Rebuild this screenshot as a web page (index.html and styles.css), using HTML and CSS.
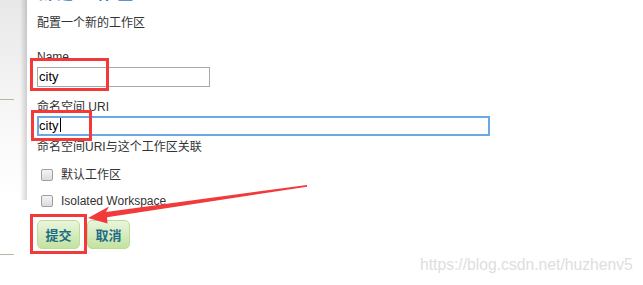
FILE: index.html
```html
<!DOCTYPE html>
<html lang="zh-CN">
<head>
  <meta charset="UTF-8">
  <title>新建工作区</title>
  <link rel="stylesheet" href="styles.css">
</head>
<body>
  <div class="page">
    <!-- left page area behind the dialog -->
    <div class="side"></div>

    <!-- workspace form -->
    <div class="dialog">
      <h2 class="title">新建工作区</h2>
      <p class="desc">配置一个新的工作区</p>

      <label class="field-label">Name</label>
      <div class="input name-input">city</div>

      <label class="field-label uri-label">命名空间 URI</label>
      <div class="input uri-input">city<span class="caret"></span></div>
      <p class="help">命名空间URI与这个工作区关联</p>

      <div class="check-row first"><span class="box"></span>默认工作区</div>
      <div class="check-row"><span class="box"></span>Isolated Workspace</div>

      <div class="buttons">
        <button class="btn">提交</button>
        <button class="btn">取消</button>
      </div>
    </div>
  </div>

  <!-- screenshot annotations -->
  <div class="mark mark-name"></div>
  <div class="mark mark-uri"></div>
  <div class="mark mark-submit"></div>
  <svg class="arrow" width="643" height="285" viewBox="0 0 643 285">
    <polygon points="88,218 109,206.5 106,212 307,185 307,186.8 107,217.2 107.5,223.5" fill="#f23a3a"/>
  </svg>
  <div class="watermark">https://blog.csdn.net/huzhenv5</div>
</body>
</html>
```

FILE: styles.css
```css
body, html {
  margin: 0;
  padding: 0;
  overflow: hidden;
  background: #fff;
  font-family: "Liberation Sans", "Noto Sans CJK SC", sans-serif;
  color: #333;
}
.page {
  display: flex;
  height: 285px;
}

/* Left side, behind the dialog */
.side {
  width: 27px;
  flex-shrink: 0;
  background:
    linear-gradient(#b2b8a4, #b2b8a4) no-repeat 0 99px / 14px 1px,
    linear-gradient(#b2b8a4, #b2b8a4) no-repeat 0 254px / 14px 1px,
    linear-gradient(to right, rgba(0,0,0,0) 20px, rgba(0,0,0,0.16) 27px) no-repeat 0 0 / 27px 200px,
    linear-gradient(#e8e8e8, #fafafa 140px, #fff 200px);
}

/* Dialog */
.dialog {
  flex: 1;
  padding-left: 10px;
  font-size: 12px;
}
.title {
  margin: -15px 0 0;
  height: 17px;
  line-height: 17px;
  font-size: 16px;
  font-weight: bold;
  color: #3a7bc2;
  letter-spacing: 4px;
}
.desc {
  margin: 12px 0 0;
  line-height: 18px;
}
.field-label {
  display: block;
  margin-top: 18px;
  line-height: 14px;
}
.uri-label {
  margin-top: 13px;
}
.input {
  box-sizing: border-box;
  height: 20px;
  line-height: 18px;
  padding-left: 1px;
  border: 1px solid #a9a9a9;
  font-size: 13px;
  color: #000;
}
.name-input {
  width: 173px;
  margin-top: 3px;
}
.uri-input {
  width: 453px;
  margin-top: 2px;
  border: 2px solid #6aa8e6;
  line-height: 16px;
  padding-left: 0;
}
.caret {
  display: inline-block;
  width: 1px;
  height: 14px;
  margin-left: 1px;
  background: #000;
  vertical-align: -2px;
}
.help {
  margin: 4px 0 0;
  line-height: 14px;
}

/* Checkboxes */
.check-row {
  display: flex;
  align-items: center;
  margin-top: 12px;
  line-height: 14px;
}
.check-row.first {
  margin-top: 14px;
}
.box {
  box-sizing: border-box;
  width: 12px;
  height: 12px;
  margin: 0 8px 0 4px;
  border: 1px solid #a0a0a0;
  border-radius: 2px;
  background: linear-gradient(#f4f4f4, #dcdcdc);
}

/* Buttons */
.buttons {
  display: flex;
  gap: 7px;
  margin-top: 12px;
}
.btn {
  width: 43px;
  height: 29px;
  padding: 0;
  border: 1px solid #bcdc98;
  border-radius: 5px;
  background: linear-gradient(#e9f5dc, #c3e2a0);
  color: #1d6c86;
  font-family: "Noto Sans CJK SC", sans-serif;
  font-size: 13px;
  font-weight: bold;
}

/* Annotations over the screenshot */
.mark {
  position: absolute;
  box-sizing: border-box;
  border: 3px solid #f23a3a;
}
.mark-name {
  left: 30px;
  top: 58px;
  width: 79px;
  height: 33px;
}
.mark-uri {
  left: 31px;
  top: 110px;
  width: 61px;
  height: 31px;
}
.mark-submit {
  left: 30px;
  top: 214px;
  width: 57px;
  height: 40px;
}
.arrow {
  position: absolute;
  left: 0;
  top: 0;
}
.watermark {
  position: absolute;
  left: 420px;
  top: 256px;
  font-size: 15.7px;
  color: #dedede;
}
```
